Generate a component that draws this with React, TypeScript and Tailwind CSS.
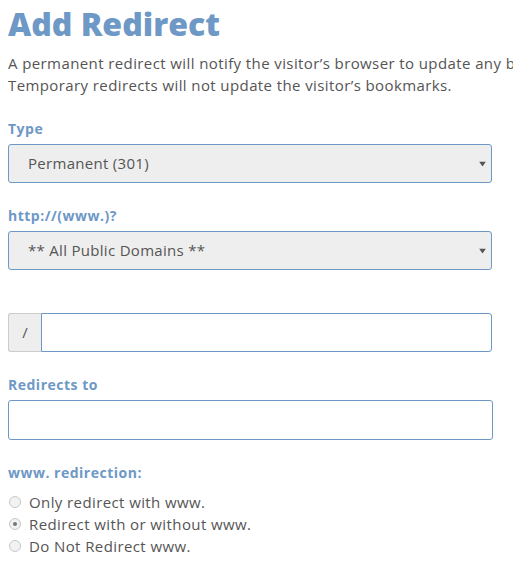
import React, { useState } from 'react';

const Caret = () => (
  <svg width="7" height="5" viewBox="0 0 7 5" className="absolute right-[5px] top-1/2 -translate-y-1/2">
    <path d="M0 0h7L3.5 5z" fill="#555" />
  </svg>
);

const Label = ({ children }: { children: React.ReactNode }) => (
  <div className="text-[14px] font-bold text-[#6e98c5] leading-5 tracking-[0.5px] mb-[5px]">{children}</div>
);

const App = () => {
  const [www, setWww] = useState('either');
  const options = [
    { id: 'only', label: 'Only redirect with www.' },
    { id: 'either', label: 'Redirect with or without www.' },
    { id: 'none', label: 'Do Not Redirect www.' },
  ];

  return (
    <div className="w-[513px] h-[571px] overflow-hidden bg-white pl-2 font-['Open_Sans',sans-serif] text-[#555]">
      <h1 className="text-[32px] font-extrabold text-[#6e98c5] leading-[40px] pt-[4px] whitespace-nowrap">Add Redirect</h1>
      <p className="text-[15px] leading-[22px] tracking-[0.4px] mt-[8px] w-[505px] overflow-hidden whitespace-nowrap">
        A permanent redirect will notify the visitor’s browser to update any bookmarks that are linked to the page.
        <br />
        Temporary redirects will not update the visitor’s bookmarks.
      </p>

      <div className="mt-[23px]">
        <Label>Type</Label>
        <div className="relative w-[484px] h-[39px] rounded-[3px] border border-[#6e98c5] bg-[#eee] flex items-center pl-[19px] text-[15px] tracking-[0.3px]">
          Permanent (301)
          <Caret />
        </div>
      </div>

      <div className="mt-[23px]">
        <Label>http://(www.)?</Label>
        <div className="relative w-[484px] h-[39px] rounded-[3px] border border-[#6e98c5] bg-[#eee] flex items-center pl-[19px] text-[15px] tracking-[0.3px]">
          ** All Public Domains **
          <Caret />
        </div>
      </div>

      <div className="mt-[43px] flex w-[484px] h-[39px]">
        <div className="w-[33px] h-full bg-[#eee] border border-r-0 border-[#ccc] rounded-l-[3px] flex items-center justify-center text-[15px]">/</div>
        <input className="flex-1 h-full border border-[#6e98c5] rounded-r-[3px] outline-none px-2" />
      </div>

      <div className="mt-[23px]">
        <Label>Redirects to</Label>
        <input className="w-[485px] h-[40px] border border-[#6e98c5] rounded-[3px] outline-none px-2 block" />
      </div>

      <div className="mt-[23px]">
        <Label>www. redirection:</Label>
        <div className="mt-[8px] flex flex-col">
          {options.map((o) => (
            <label key={o.id} className="flex items-center h-[22px] text-[15px] tracking-[0.4px] cursor-pointer">
              <span className="w-[12px] h-[12px] rounded-full border border-[#c8c8c8] bg-[#f2f2f2] flex items-center justify-center mr-[8px] ml-[1px]">
                {www === o.id && <span className="w-[4px] h-[4px] rounded-full bg-[#777]" />}
              </span>
              <input type="radio" className="hidden" checked={www === o.id} onChange={() => setWww(o.id)} />
              {o.label}
            </label>
          ))}
        </div>
      </div>
    </div>
  );
};

export default App;
